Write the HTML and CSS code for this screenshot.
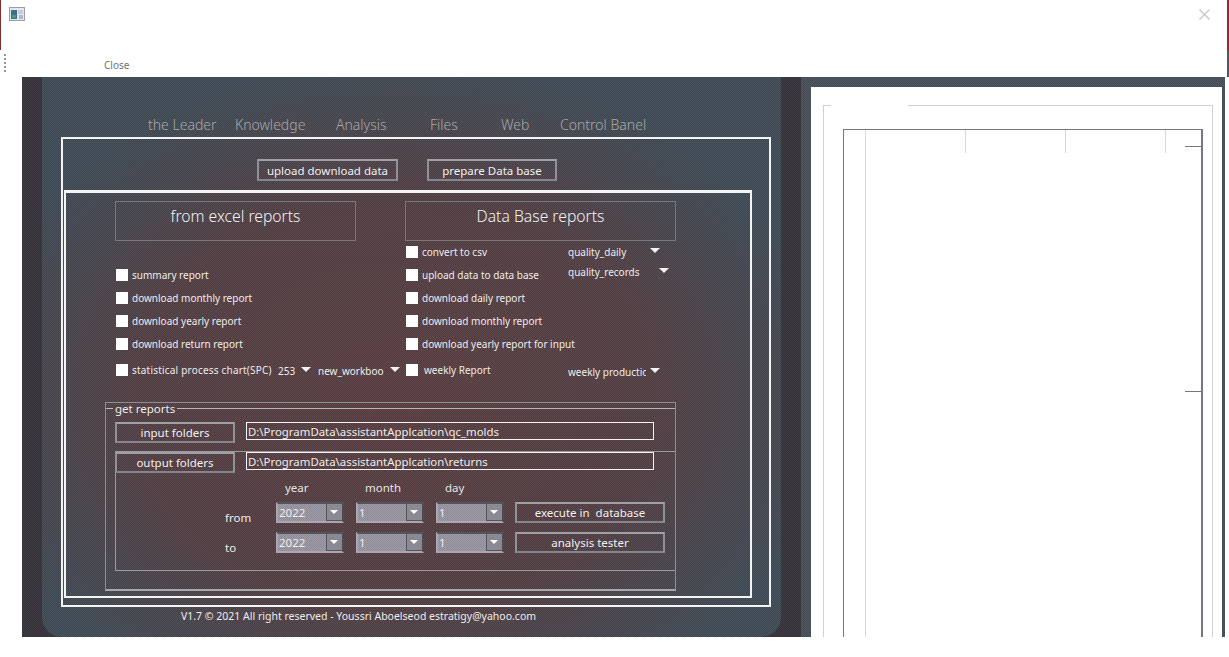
FILE: index.html
```html
<!DOCTYPE html>
<html>
<head>
<title>assistant application</title>
<meta name="viewport" content="width=device-width, initial-scale=1">
<link rel="stylesheet" href="styles.css">
</head>
<body>

<div class="titlebar">
  <svg class="app-icon" width="16" height="14" viewBox="0 0 16 14">
    <rect x="0.5" y="0.5" width="15" height="13" fill="#e4e8ee" stroke="#9a9fa8"/>
    <rect x="2" y="3" width="6" height="9" fill="#3f6f8c"/>
    <rect x="3" y="8" width="4" height="3" fill="#4f9a78"/>
    <rect x="9" y="3" width="5" height="4" fill="#c6ccd8"/>
    <rect x="10" y="8" width="4" height="4" fill="#b0b8c6"/>
  </svg>
  <svg class="close-x" width="11" height="11" viewBox="0 0 11 11">
    <path d="M0.5 0.5 10.5 10.5M10.5 0.5 0.5 10.5" stroke="#c4c8c8" stroke-width="1.4" fill="none"/>
  </svg>
</div>

<div class="toolbar">
  <span class="gripper"></span>
  <span class="close-label">Close</span>
</div>

<div class="workspace">
  <div class="form">
    <div class="nav">
      <span>the Leader</span>
      <span>Knowledge</span>
      <span>Analysis</span>
      <span>Files</span>
      <span>Web</span>
      <span>Control Banel</span>
    </div>

    <div class="frame-outer">
      <div class="top-buttons">
        <button class="btn btn-upload">upload download data</button>
        <button class="btn btn-prepare">prepare Data base</button>
      </div>

      <div class="frame-inner">
        <div class="reports">
          <div class="col-left">
            <div class="col-head">from excel reports</div>
            <div class="rows">
              <div class="row"></div>
              <label class="row"><input type="checkbox"><span>summary report</span></label>
              <label class="row"><input type="checkbox"><span>download monthly report</span></label>
              <label class="row"><input type="checkbox"><span>download yearly report</span></label>
              <label class="row"><input type="checkbox"><span>download return report</span></label>
              <div class="row row-last">
                <input type="checkbox"><span class="spc">statistical process chart(SPC)</span>
                <span class="drop drop-num">253<i class="arrow"></i></span>
                <span class="drop drop-book">new_workboo<i class="arrow"></i></span>
              </div>
            </div>
          </div>
          <div class="col-right">
            <div class="col-head">Data Base reports</div>
            <div class="rows">
              <div class="row"><input type="checkbox"><span class="lbl">convert to csv</span><span class="drop drop-a">quality_daily<i class="arrow"></i></span></div>
              <div class="row"><input type="checkbox"><span class="lbl">upload data to data base</span><span class="drop drop-b">quality_records<i class="arrow"></i></span></div>
              <label class="row"><input type="checkbox"><span>download daily report</span></label>
              <label class="row"><input type="checkbox"><span>download monthly report</span></label>
              <label class="row"><input type="checkbox"><span>download yearly report for input</span></label>
              <div class="row row-last"><input type="checkbox"><span class="lbl lbl-weekly">weekly Report</span><span class="drop drop-c"><b>weekly production</b><i class="arrow"></i></span></div>
            </div>
          </div>
        </div>

        <div class="group">
          <div class="group-head"><span class="dash"></span><span class="legend">get reports</span><span class="line"></span></div>
          <div class="folder-row folder-first">
            <button class="btn btn-folder">input folders</button>
            <input class="path" value="D:\ProgramData\assistantApplcation\qc_molds">
          </div>
          <div class="date-box">
            <div class="folder-row folder-second">
              <button class="btn btn-folder">output folders</button>
              <input class="path" value="D:\ProgramData\assistantApplcation\returns">
            </div>
            <div class="dates">
              <span></span><span class="date-head">year</span><span class="date-head">month</span><span class="date-head">day</span><span></span>
              <span class="date-label">from</span>
              <span class="combo">2022<i></i></span><span class="combo">1<i></i></span><span class="combo">1<i></i></span>
              <button class="btn btn-exec">execute in&nbsp; database</button>
              <span class="date-label">to</span>
              <span class="combo">2022<i></i></span><span class="combo">1<i></i></span><span class="combo">1<i></i></span>
              <button class="btn btn-exec">analysis tester</button>
            </div>
          </div>
        </div>
      </div>
    </div>

    <div class="footer">V1.7 © 2021 All right reserved - Youssri Aboelseod estratigy@yahoo.com</div>
  </div>

  <div class="preview">
    <div class="page">
      <div class="sheet">
        <div class="sheet-gap"></div>
        <div class="chart">
          <span class="long-tick"></span>
          <div class="ruler"><span></span><span></span><span></span></div>
          <span class="mark mark-a"></span>
          <span class="mark mark-b"></span>
        </div>
      </div>
    </div>
  </div>
</div>

</body>
</html>
```

FILE: styles.css
```css
html, body {
  margin: 0;
  height: 657px;
  overflow: hidden;
  background: #fff;
}

body {
  font-family: "Noto Sans", sans-serif;
  font-size: 10px;
  color: #ececec;
}

.titlebar {
  height: 50px;
  display: flex;
  justify-content: space-between;
  align-items: flex-start;
  padding: 7px 17px 0 9px;
  box-sizing: border-box;
  border-left: 1px solid #7c3030;
  border-right: 2px solid #96282c;
}

.app-icon {
  margin-left: -1px;
}

.close-x {
  margin-top: 2px;
}

.toolbar {
  height: 27px;
  display: flex;
  align-items: flex-start;
  padding-left: 4px;
  border-right: 2px solid #55555c;
  box-sizing: border-box;
}

.gripper {
  width: 2px;
  height: 18px;
  margin-top: 4px;
  border-left: 2px dotted #8a9a9a;
}

.close-label {
  margin: 8px 0 0 96px;
  color: #6f7474;
  font-size: 10px;
  line-height: 14px;
}

.workspace {
  margin-left: 22px;
  margin-right: 4px;
  height: 560px;
  display: flex;
  background:
    repeating-conic-gradient(rgba(255,255,255,0.035) 0 25%, rgba(0,0,0,0.06) 0 50%) 0 0/2px 2px,
    #37343c;
}

.form {
  margin-left: 20px;
  width: 739px;
  flex: none;
  box-sizing: border-box;
  padding-top: 38px;
  border-radius: 0 0 20px 20px;
  background:
    repeating-conic-gradient(rgba(255,255,255,0.06) 0 25%, rgba(0,0,0,0.08) 0 50%) 0 0/2px 2px,
    radial-gradient(ellipse 430px 340px at 48% 58%, #5a3e40 0, #533f44 60%, #3f4b56 100%);
}

.nav {
  display: grid;
  grid-template-columns: 87px 101px 94px 71px 59px auto;
  padding-left: 106px;
  height: 21px;
  font-size: 14px;
  font-weight: 300;
  line-height: 19px;
  color: #a8a8a8;
}

.frame-outer {
  margin-left: 19px;
  margin-top: 1px;
  width: 710px;
  height: 470px;
  box-sizing: border-box;
  border: 2px solid #f4f4f4;
  padding: 20px 1px 0;
}

.btn {
  font-family: inherit;
  font-size: 11.5px;
  color: #f0f0f0;
  background: transparent;
  border: 2px solid #8f9098;
  border-top-color: #a0a0a8;
  border-bottom-color: #85868e;
  padding: 0;
  box-sizing: border-box;
}

.top-buttons {
  display: flex;
  height: 22px;
  padding-left: 193px;
  gap: 29px;
}

.btn-upload {
  width: 141px;
}

.btn-prepare {
  width: 130px;
}

.frame-inner {
  width: 688px;
  height: 408px;
  margin-top: 9px;
  box-sizing: border-box;
  border: 2px solid #f4f4f4;
  border-width: 3px 2px 2px;
  padding: 8px 0 0 49px;
}

.reports {
  display: grid;
  grid-template-columns: 241px 271px;
  column-gap: 49px;
}

.col-head {
  height: 40px;
  margin-bottom: -1px;
  box-sizing: border-box;
  border: 1px solid #77777c;
  font-size: 15.7px;
  font-weight: 300;
  line-height: 28px;
  text-align: center;
  color: #f2f2f2;
}

.rows {
  padding-left: 1px;
}

.row {
  display: flex;
  align-items: center;
  height: 23px;
  white-space: nowrap;
}

.row-last {
  height: 29px;
}

.row input {
  appearance: none;
  width: 12px;
  height: 12px;
  margin: 0 4px 0 0;
  background: #fff;
  flex: none;
}

.spc,
.lbl {
  width: 146px;
  flex: none;
}

.spc {
  letter-spacing: 0.2px;
}

.lbl-weekly {
  padding-left: 2px;
  width: 144px;
}

.drop {
  display: flex;
  align-items: center;
  flex: none;
  justify-content: space-between;
}

.drop b {
  font-weight: normal;
  width: 78px;
  overflow: hidden;
}

.arrow {
  width: 0;
  height: 0;
  border-left: 5px solid transparent;
  border-right: 5px solid transparent;
  border-top: 5px solid #f4f4f4;
  margin-top: -3px;
  flex: none;
}

.drop-num {
  width: 33px;
  margin-top: 2px;
}

.drop-book {
  width: 82px;
  margin-left: 7px;
  margin-top: 2px;
}

.drop-a {
  width: 92px;
  margin-top: 1px;
}

.drop-b {
  width: 101px;
  margin-top: -5px;
}

.drop-c {
  width: 92px;
  margin-top: 4px;
}

.group {
  width: 571px;
  height: 189px;
  margin: 18px 0 0 -10px;
  box-sizing: border-box;
  border: 1px solid #8d8d92;
  border-bottom: 2px solid #a8a8ac;
}

.group-head {
  display: flex;
  align-items: center;
  height: 11px;
}

.dash {
  width: 7px;
  height: 1px;
  background: #b8b8bc;
}

.line {
  flex: 1;
  height: 1px;
  background: #b8b8bc;
}

.legend {
  padding: 0 2px;
  font-size: 11.5px;
}

.folder-row {
  display: flex;
  align-items: flex-start;
  gap: 11px;
}

.folder-first {
  margin: 8px 0 0 9px;
  height: 29px;
}

.folder-second {
  margin-left: -1px;
}

.btn-folder {
  width: 120px;
  height: 21px;
  flex: none;
}

.path {
  width: 408px;
  height: 18px;
  box-sizing: border-box;
  border: 1px solid #f4f4f4;
  background: transparent;
  color: #ececec;
  font-family: inherit;
  font-size: 11.4px;
  padding: 0 0 0 1px;
  outline: none;
}

.date-box {
  margin-left: 9px;
  height: 120px;
  box-sizing: border-box;
  border-top: 1px solid #9a9aa0;
  border-left: 1px solid #9a9aa0;
  border-bottom: 1px solid #9a9aa0;
}

.dates {
  display: grid;
  grid-template-columns: 51px 80px 80px 79px 150px;
  grid-template-rows: 13px 21px 21px;
  row-gap: 9px;
  padding: 7px 0 0 109px;
}

.date-head {
  padding-left: 9px;
  font-size: 11.5px;
  line-height: 16px;
  color: #e4e4e4;
}

.date-label {
  font-size: 11.5px;
  line-height: 16px;
  align-self: end;
  margin-bottom: -3px;
}

.combo {
  width: 68px;
  height: 21px;
  box-sizing: border-box;
  border: 2px solid;
  border-color: #55545c #4a4a50 #aaa6b2 #aaa6b2;
  padding-left: 1px;
  font-size: 11.5px;
  line-height: 17px;
  color: #eeeeee;
  display: flex;
  justify-content: space-between;
  background:
    repeating-conic-gradient(rgba(255,255,255,0.09) 0 25%, rgba(0,0,0,0.09) 0 50%) 0 0/2px 2px,
    #9a96a2;
}

.combo i {
  width: 16px;
  height: 17px;
  position: relative;
  background: #8b8992;
  border-left: 1px solid #55545c;
  border-bottom: 1px solid #55545c;
  box-sizing: border-box;
}

.combo i:after {
  content: "";
  position: absolute;
  left: 3px;
  top: 6px;
  border-left: 4px solid transparent;
  border-right: 4px solid transparent;
  border-top: 4px solid #fff;
}

.btn-exec {
  height: 21px;
}

.footer {
  padding: 2px 0 0 139px;
  font-size: 10.5px;
  line-height: 15px;
}

.preview {
  margin-left: 20px;
  flex: 1;
  padding: 10px 3px 0 10px;
  background:
    repeating-conic-gradient(rgba(255,255,255,0.05) 0 25%, rgba(0,0,0,0.07) 0 50%) 0 0/2px 2px,
    #47505a;
  overflow: hidden;
}

.page {
  background: #fff;
  height: 100%;
  box-sizing: border-box;
  padding: 18px 9px 0 12px;
}

.sheet {
  height: 100%;
  box-sizing: border-box;
  border: 1px solid #cfcfcf;
  border-bottom: none;
  padding: 23px 9px 0 19px;
}

.sheet-gap {
  width: 77px;
  height: 1px;
  margin: -24px 0 23px -12px;
  background: #fff;
}

.chart {
  position: relative;
  height: 100%;
  box-sizing: border-box;
  border: 1px solid #77757f;
  border-right-width: 2px;
  border-bottom: none;
}

.ruler {
  display: flex;
  height: 23px;
  padding-left: 121px;
}

.ruler span {
  width: 100px;
  flex: none;
  height: 23px;
  border-left: 1px solid #d4d8d8;
  box-sizing: border-box;
}

.long-tick {
  position: absolute;
  left: 21px;
  top: 0;
  bottom: 0;
  border-left: 1px solid #d8dcdc;
}

.mark {
  position: absolute;
  right: 0;
  width: 16px;
  height: 1px;
  background: #77757f;
}

.mark-a {
  top: 16px;
}

.mark-b {
  top: 261px;
}
```
